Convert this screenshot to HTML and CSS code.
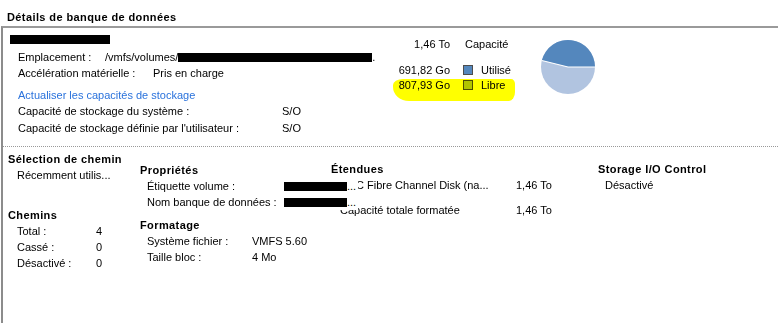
FILE: index.html
```html
<!DOCTYPE html>
<html lang="fr">
<head>
    <meta charset="UTF-8">
    <title>Détails de banque de données</title>
    <link rel="stylesheet" href="styles.css">
</head>
<body>
    <div class="title">Détails de banque de données</div>
    <div class="frame">
        <div class="top">
            <div class="info">
                <div class="row"><span class="redact r-name"></span></div>
                <div class="row gap2"><span class="lbl l-loc">Emplacement :</span><span>/vmfs/volumes/</span><span class="redact r-path"></span><span>.</span></div>
                <div class="row"><span class="lbl l-acc">Accélération matérielle :</span><span>Pris en charge</span></div>
                <a href="#" class="row link">Actualiser les capacités de stockage</a>
                <div class="row"><span class="lbl l-cap">Capacité de stockage du système :</span><span>S/O</span></div>
                <div class="row gap1"><span class="lbl l-cap">Capacité de stockage définie par l'utilisateur :</span><span>S/O</span></div>
            </div>

            <div class="stats">
                <span class="num">1,46 To</span>
                <span class="key plain">Capacité</span>
                <span class="num">691,82 Go</span>
                <span class="key"><i class="sw used"></i>Utilisé</span>
                <span class="num">807,93 Go</span>
                <span class="key"><i class="sw free"></i>Libre</span>
                <span class="marker"></span>
            </div>

            <svg class="pie" width="56" height="56" viewBox="0 0 56 56">
                <circle cx="28" cy="28" r="27" fill="#b1c4e0"/>
                <path d="M28,28 L55,28 A27,27 0 0,0 1.8,21.5 Z" fill="#5487bd"/>
                <path d="M1.8,21.5 L28,28 L55,28" fill="none" stroke="#fff" stroke-width="1.2"/>
            </svg>
        </div>

        <div class="bottom">
            <div class="col c-path">
                <div class="head">Sélection de chemin</div>
                <div class="item">Récemment utilis...</div>
                <div class="head h-paths">Chemins</div>
                <div class="item"><span class="lbl l-path">Total :</span>4</div>
                <div class="item"><span class="lbl l-path">Cassé :</span>0</div>
                <div class="item"><span class="lbl l-path">Désactivé :</span>0</div>
            </div>
            <div class="col c-props">
                <div class="head">Propriétés</div>
                <div class="item"><span class="lbl l-vol">Étiquette volume :</span><span class="hidden-val"><i class="redact r-val"></i>...</span></div>
                <div class="item"><span class="lbl l-vol">Nom banque de données :</span><span class="hidden-val"><i class="redact r-val"></i>...</span></div>
                <div class="head h-fmt">Formatage</div>
                <div class="item"><span class="lbl l-fs">Système fichier :</span>VMFS 5.60</div>
                <div class="item"><span class="lbl l-fs">Taille bloc :</span>4 Mo</div>
            </div>
            <div class="col c-ext">
                <div class="head">Étendues</div>
                <div class="item ext e-first"><span class="lbl l-ext">C Fibre Channel Disk (na...</span>1,46 To</div>
                <div class="item ext e-gap"><span class="lbl l-ext">Capacité totale formatée</span>1,46 To</div>
            </div>
            <div class="col c-sioc">
                <div class="head">Storage I/O Control</div>
                <div class="item">Désactivé</div>
            </div>
        </div>
    </div>
</body>
</html>
```

FILE: styles.css
```css
body { margin: 0; font-family: "Liberation Sans", Arial, sans-serif; font-size: 11px; color: #000; background: #fff; overflow: hidden; }
.title { font-weight: bold; letter-spacing: 0.4px; padding: 9px 0 0 7px; line-height: 16px; }
.frame { margin: 1px 0 0 1px; border-left: 2px solid #8c8c8c; border-top: 2px solid #9a9a9a; height: calc(100vh - 28px); }

/* partie haute */
.top { display: flex; padding-bottom: 10px; }
.info { flex: none; width: 387px; padding: 3px 0 0 15px; box-sizing: border-box; }
.row { display: flex; min-height: 16px; line-height: 16px; white-space: nowrap; }
.gap2 { margin-top: 2px; }
.gap1 { margin-top: 1px; }
.lbl { flex: none; }
.l-loc { width: 87px; }
.l-acc { width: 135px; }
.l-cap { width: 264px; }
.link { color: #2a72dc; text-decoration: none; margin-top: 6px; }
.redact { display: inline-block; background: #000; height: 9px; align-self: center; }
.r-name { width: 100px; margin-left: -8px; }
.r-path { width: 194px; }

.stats { position: relative; flex: none; width: 150px; padding-top: 9px; display: grid; grid-template-columns: 60px auto; grid-template-rows: 26px 15px 15px; column-gap: 13px; line-height: 15px; align-content: start; white-space: nowrap; }
.num { text-align: right; }
.key.plain { padding-left: 2px; }
.sw { display: inline-block; width: 8px; height: 8px; border: 1px solid #4d4d4d; margin-right: 8px; vertical-align: -1px; }
.sw.used { background: #5487bd; }
.sw.free { background: #b1c4e0; }
.marker { position: absolute; left: 3px; top: 51px; width: 122px; height: 22px; background: #ffff00; mix-blend-mode: multiply; border-radius: 10px 4px 6px 16px / 6px 5px 9px 14px; }

.pie { flex: none; margin-top: 11px; }

/* partie basse */
.bottom { display: flex; border-top: 1px dotted #999; }
.col { flex: none; box-sizing: border-box; }
.head { font-weight: bold; letter-spacing: 0.4px; line-height: 16px; white-space: nowrap; }
.item { display: flex; line-height: 16px; white-space: nowrap; }
.c-path { width: 137px; padding: 4px 0 0 5px; }
.c-path .item { padding-left: 9px; }
.h-paths { margin-top: 24px; }
.l-path { width: 79px; }
.c-props { width: 191px; padding-top: 15px; }
.c-props .item { padding-left: 7px; }
.h-fmt { margin-top: 7px; }
.l-vol { width: 137px; }
.l-fs { width: 105px; }
.hidden-val { position: relative; z-index: 1; background: #fff; display: inline-flex; align-items: center; padding-right: 2px; }
.r-val { width: 63px; }
.c-ext { width: 267px; padding-top: 14px; }
.c-ext .item { padding-left: 9px; }
.c-ext .e-first { padding-left: 25px; }
.e-first .l-ext { width: 160px; }
.e-gap { margin-top: 9px; }
.l-ext { width: 176px; }
.c-sioc { padding-top: 14px; }
.c-sioc .item { padding-left: 7px; }
```
